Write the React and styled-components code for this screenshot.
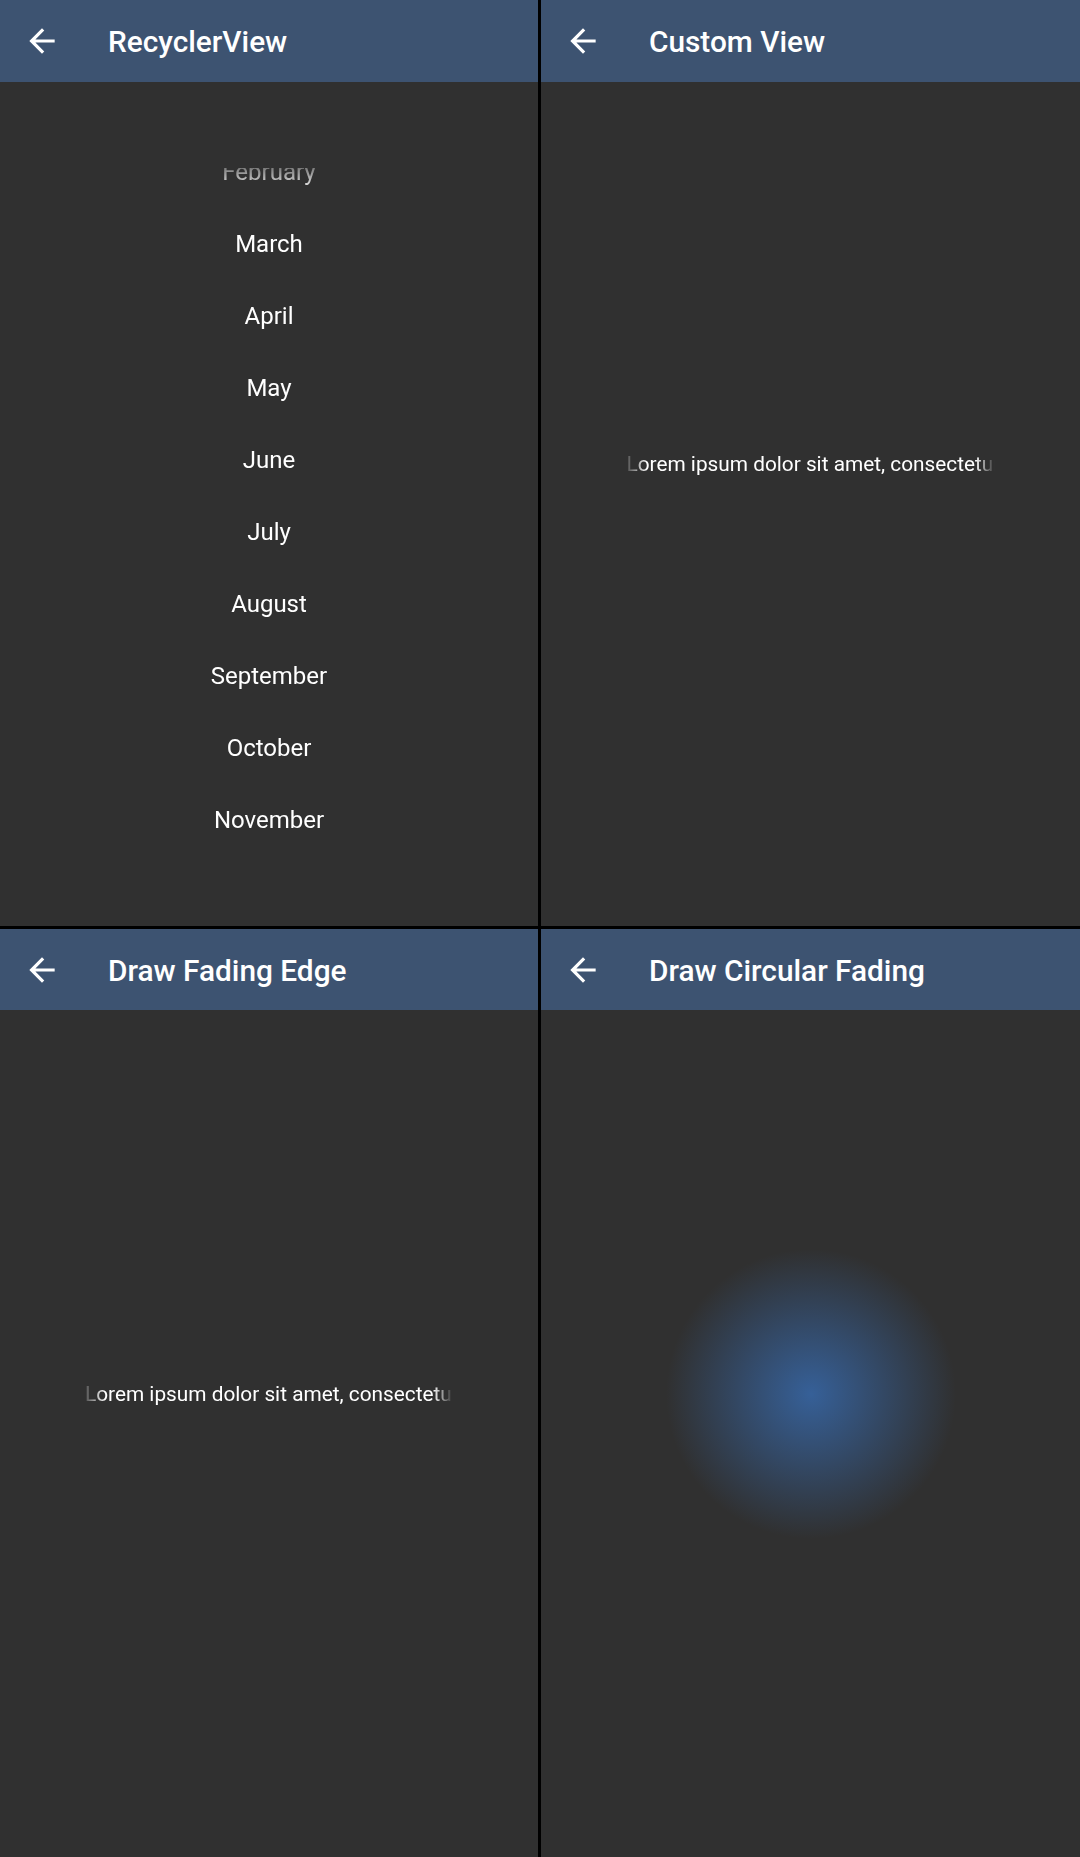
import React from "react";
import styled, { createGlobalStyle } from "styled-components";

const GlobalStyle = createGlobalStyle`
  html, body {
    margin: 0;
    padding: 0;
    background: #000;
  }
  body {
    font-family: Roboto, "Noto Sans", "Liberation Sans", sans-serif;
    -webkit-font-smoothing: antialiased;
  }
`;

const Grid = styled.div`
  display: grid;
  grid-template-columns: 538px 539px;
  grid-template-rows: 926px 928px;
  column-gap: 3px;
  row-gap: 3px;
  width: 1080px;
  height: 1857px;
  background: #000;
  overflow: hidden;
`;

const Panel = styled.section`
  display: flex;
  flex-direction: column;
  background: #303030;
  overflow: hidden;
  min-width: 0;
`;

const AppBar = styled.header`
  flex: none;
  display: flex;
  align-items: center;
  height: ${(p) => p.$h}px;
  padding-left: 23px;
  background: #3d5371;
  box-sizing: border-box;
`;

const BackButton = styled.span`
  display: flex;
  width: 38px;
  height: 38px;
  flex: none;
`;

const Title = styled.h1`
  margin: 2px 0 0 47px;
  font-family: Roboto, "Noto Sans", sans-serif;
  font-weight: 500;
  font-size: 29.8px;
  line-height: 1;
  color: #fff;
  letter-spacing: 0;
`;

const Content = styled.div`
  flex: 1;
  display: flex;
  flex-direction: column;
  align-items: center;
  justify-content: ${(p) => (p.$top ? "flex-start" : "center")};
  padding-top: ${(p) => (p.$top ? "86px" : "0")};
  padding-bottom: ${(p) => (p.$top ? "0" : "80px")};
  box-sizing: border-box;
  min-height: 0;
`;

const MonthList = styled.ul`
  list-style: none;
  margin: 0;
  padding: 0;
  width: 100%;
  height: 688px;
  overflow: hidden;
  -webkit-mask-image: linear-gradient(to bottom, rgba(0,0,0,0.37) 0, #000 24px);
  mask-image: linear-gradient(to bottom, rgba(0,0,0,0.37) 0, #000 24px);
`;

const MonthItem = styled.li`
  display: flex;
  align-items: center;
  justify-content: center;
  height: 72px;
  font-size: 24px;
  color: #fff;
  &:first-child {
    margin-top: -32px;
  }
`;

const FadingText = styled.div`
  width: 368px;
  overflow: hidden;
  white-space: nowrap;
  font-size: 20.8px;
  line-height: 24px;
  color: #fff;
  -webkit-mask-image: linear-gradient(
    to right,
    rgba(0,0,0,0.15) 0,
    #000 20px,
    #000 calc(100% - 20px),
    rgba(0,0,0,0) 100%
  );
  mask-image: linear-gradient(
    to right,
    rgba(0,0,0,0.15) 0,
    #000 20px,
    #000 calc(100% - 20px),
    rgba(0,0,0,0) 100%
  );
`;

const Glow = styled.div`
  width: 290px;
  height: 290px;
  border-radius: 50%;
  background: radial-gradient(
    circle closest-side,
    rgba(54, 96, 152, 1) 0%,
    rgba(54, 96, 152, 0.5) 50%,
    rgba(54, 96, 152, 0) 100%
  );
`;

const ArrowBack = () => (
  <BackButton>
    <svg viewBox="0 0 24 24" width="38" height="38" aria-hidden="true">
      <path
        fill="#fff"
        d="M20 11H7.83l5.59-5.59L12 4l-8 8 8 8 1.41-1.41L7.83 13H20v-2z"
      />
    </svg>
  </BackButton>
);

const Bar = ({ title, h }) => (
  <AppBar $h={h}>
    <ArrowBack />
    <Title>{title}</Title>
  </AppBar>
);

const months = [
  "February",
  "March",
  "April",
  "May",
  "June",
  "July",
  "August",
  "September",
  "October",
  "November",
];

const lorem = "Lorem ipsum dolor sit amet, consectetur adipiscing elit.";

export default function App() {
  return (
    <>
      <GlobalStyle />
      <Grid>
        <Panel>
          <Bar title="RecyclerView" h={82} />
          <Content $top>
            <MonthList>
              {months.map((m) => (
                <MonthItem key={m}>{m}</MonthItem>
              ))}
            </MonthList>
          </Content>
        </Panel>
        <Panel>
          <Bar title="Custom View" h={82} />
          <Content>
            <FadingText>{lorem}</FadingText>
          </Content>
        </Panel>
        <Panel>
          <Bar title="Draw Fading Edge" h={81} />
          <Content>
            <FadingText>{lorem}</FadingText>
          </Content>
        </Panel>
        <Panel>
          <Bar title="Draw Circular Fading" h={81} />
          <Content>
            <Glow />
          </Content>
        </Panel>
      </Grid>
    </>
  );
}
